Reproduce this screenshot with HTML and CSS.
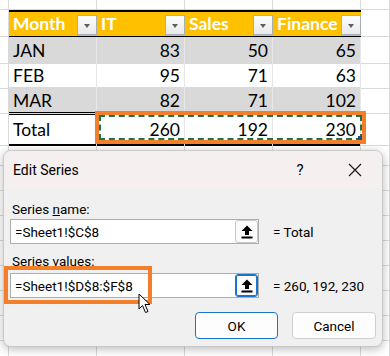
FILE: index.html
```html
<!DOCTYPE html>
<html lang="en">
<head>
  <meta charset="UTF-8">
  <meta name="viewport" content="width=device-width, initial-scale=1.0">
  <title>Edit Series</title>
  <link rel="stylesheet" href="styles.css">
</head>
<body>
  <div class="sheet">
    <div class="row row-top">
      <div class="cell"></div><div class="cell"></div><div class="cell"></div>
      <div class="cell"></div><div class="cell"></div><div class="cell"></div>
    </div>
    <div class="row row-head">
      <div class="cell"></div>
      <div class="cell th">Month<span class="filter"></span></div>
      <div class="cell th">IT<span class="filter"></span></div>
      <div class="cell th">Sales<span class="filter"></span></div>
      <div class="cell th">Finance<span class="filter"></span></div>
      <div class="cell"></div>
    </div>
    <div class="row band">
      <div class="cell"></div>
      <div class="cell td">JAN</div>
      <div class="cell td num">83</div>
      <div class="cell td num">50</div>
      <div class="cell td num">65</div>
      <div class="cell"></div>
    </div>
    <div class="row">
      <div class="cell"></div>
      <div class="cell td">FEB</div>
      <div class="cell td num">95</div>
      <div class="cell td num">71</div>
      <div class="cell td num">63</div>
      <div class="cell"></div>
    </div>
    <div class="row band">
      <div class="cell"></div>
      <div class="cell td">MAR</div>
      <div class="cell td num">82</div>
      <div class="cell td num">71</div>
      <div class="cell td num">102</div>
      <div class="cell"></div>
    </div>
    <div class="row row-total">
      <div class="cell"></div>
      <div class="cell td">Total</div>
      <div class="cell td num">260</div>
      <div class="cell td num">192</div>
      <div class="cell td num">230</div>
      <div class="cell"></div>
    </div>
    <div class="row"><div class="cell"></div><div class="cell"></div><div class="cell"></div><div class="cell"></div><div class="cell"></div><div class="cell"></div></div>
    <div class="row"><div class="cell"></div><div class="cell"></div><div class="cell"></div><div class="cell"></div><div class="cell"></div><div class="cell"></div></div>
    <div class="row"><div class="cell"></div><div class="cell"></div><div class="cell"></div><div class="cell"></div><div class="cell"></div><div class="cell"></div></div>
    <div class="row"><div class="cell"></div><div class="cell"></div><div class="cell"></div><div class="cell"></div><div class="cell"></div><div class="cell"></div></div>
    <div class="row"><div class="cell"></div><div class="cell"></div><div class="cell"></div><div class="cell"></div><div class="cell"></div><div class="cell"></div></div>
    <div class="row"><div class="cell"></div><div class="cell"></div><div class="cell"></div><div class="cell"></div><div class="cell"></div><div class="cell"></div></div>
    <div class="row"><div class="cell"></div><div class="cell"></div><div class="cell"></div><div class="cell"></div><div class="cell"></div><div class="cell"></div></div>
    <div class="row"><div class="cell"></div><div class="cell"></div><div class="cell"></div><div class="cell"></div><div class="cell"></div><div class="cell"></div></div>
    <div class="row"><div class="cell"></div><div class="cell"></div><div class="cell"></div><div class="cell"></div><div class="cell"></div><div class="cell"></div></div>
  </div>

  <!-- copy marquee + highlight on the total cells -->
  <div class="marquee"><span class="handle"></span></div>
  <div class="pick pick-total"></div>

  <div class="dialog">
    <div class="titlebar">
      <span class="title">Edit Series</span>
      <span class="help">?</span>
      <span class="close">
        <svg width="14" height="14" viewBox="0 0 14 14"><path d="M1 1 L13 13 M13 1 L1 13" stroke="#1a1a1a" stroke-width="1.2" fill="none"/></svg>
      </span>
    </div>
    <div class="body">
      <div class="label label-name">Series <u>n</u>ame:</div>
      <div class="field-row">
        <div class="ref-input">
          <span class="ref-text">=Sheet1!$C$8</span>
          <span class="collapse">
            <svg width="12" height="14" viewBox="0 0 12 14"><path d="M6 0.5 L11.5 6 H8 V10 H4 V6 H0.5 Z" fill="#000"/><rect x="0.5" y="11.5" width="11" height="2" fill="#000"/></svg>
          </span>
        </div>
        <span class="result">= Total</span>
      </div>
      <div class="label label-values">Series values:</div>
      <div class="field-row">
        <div class="ref-input">
          <span class="ref-text">=Sheet1!$D$8:$F$8</span>
          <span class="collapse focus">
            <svg width="12" height="14" viewBox="0 0 12 14"><path d="M6 0.5 L11.5 6 H8 V10 H4 V6 H0.5 Z" fill="#000"/><rect x="0.5" y="11.5" width="11" height="2" fill="#000"/></svg>
          </span>
        </div>
        <span class="result">= 260, 192, 230</span>
      </div>
      <div class="buttons">
        <button class="btn btn-default">OK</button>
        <button class="btn">Cancel</button>
      </div>
    </div>
  </div>

  <div class="pick pick-values"></div>

  <svg class="cursor" width="14" height="21" viewBox="0 0 14 21">
    <path d="M1 1 L1 16 L4.5 12.5 L7.5 19.5 L10 18.5 L7 11.5 L12 11.5 Z" fill="#fff" stroke="#000" stroke-width="1" stroke-linejoin="round"/>
  </svg>
</body>
</html>
```

FILE: styles.css
```css
body {
  margin: 0;
  background: #fff;
  overflow: hidden;
}

.sheet {
  font-family: Lato, "Liberation Sans", sans-serif;
  font-size: 17.5px;
  color: #000;
}

.row {
  display: grid;
  grid-template-columns: 9px 88px 88px 88px 88px 1fr;
  height: 25px;
}

.row-top {
  height: 10px;
}

.cell {
  position: relative;
  box-sizing: border-box;
  border-right: 1px solid #d9d9d9;
  border-bottom: 1px solid #d9d9d9;
}

.row-head {
  height: 27px;
}

.th {
  background: #ffc000;
  color: #fff;
  font-weight: 700;
  border-top: 2px solid #000;
  border-bottom: 1px solid #000;
  border-right: none;
  padding: 0 0 0 4px;
  line-height: 24px;
  white-space: nowrap;
}

.filter {
  position: absolute;
  right: 0;
  top: 3px;
  width: 20px;
  height: 20px;
  box-sizing: border-box;
  border: 1px solid #a9aeb5;
  background: linear-gradient(#fdfdfd, #e8e9eb);
}

.filter::after {
  content: '';
  position: absolute;
  left: 6px;
  top: 8px;
  border-left: 3.5px solid transparent;
  border-right: 3.5px solid transparent;
  border-top: 4px solid #5f5f5f;
}

.td {
  padding: 0 4px;
  line-height: 27px;
  white-space: nowrap;
  border-right-color: #e6e6e6;
  border-bottom: none;
}

.band .td {
  background: #d9d9d9;
  border-right-color: #e9e9e9;
}

.num {
  text-align: right;
}

.row-total {
  height: 29px;
}

.row-total .td {
  border-top: 3px double #000;
  border-bottom: 2px solid #000;
  line-height: 29px;
}

.marquee {
  position: absolute;
  left: 99px;
  top: 115px;
  width: 263px;
  height: 25px;
  box-sizing: border-box;
  border: 2px dashed #217346;
}

.handle {
  position: absolute;
  right: -3px;
  bottom: -3px;
  width: 5px;
  height: 5px;
  background: #1f4e79;
}

.pick {
  position: absolute;
  box-sizing: border-box;
  border: 4px solid #f47f2a;
  z-index: 5;
}

.pick-total {
  left: 95px;
  top: 111px;
  width: 271px;
  height: 33px;
}

.pick-values {
  left: 4px;
  top: 266px;
  width: 148px;
  height: 38px;
}

.dialog {
  position: absolute;
  left: 3px;
  top: 150px;
  width: 380px;
  height: 197px;
  box-sizing: border-box;
  border: 1px solid #c9c9c9;
  border-radius: 8px;
  background: #f0f0f0;
  box-shadow: 0 2px 10px rgba(0, 0, 0, .28);
  overflow: hidden;
  font-family: Roboto, "Noto Sans", sans-serif;
  font-size: 13.5px;
  color: #000;
}

.titlebar {
  display: flex;
  align-items: center;
  height: 37px;
  background: #f6efef;
  padding-left: 9px;
}

.title {
  flex: 1;
  font-size: 14px;
}

.help {
  width: 20px;
  text-align: center;
  font-size: 15px;
  margin-right: 38px;
}

.close {
  display: flex;
  margin-right: 20px;
}

.body {
  padding: 0 6px 0 6px;
}

.label {
  padding-left: 2px;
  line-height: 20px;
}

.label-name {
  margin-top: 11px;
}

.label-values {
  margin-top: 7px;
  margin-bottom: 2px;
}

.field-row {
  display: flex;
  align-items: center;
}

.ref-input {
  display: flex;
  align-items: center;
  width: 249px;
  height: 25px;
  box-sizing: border-box;
  border: 1px solid #adadad;
  background: #fff;
}

.ref-text {
  flex: 1;
  padding-left: 4px;
  white-space: nowrap;
}

.collapse {
  display: flex;
  align-items: center;
  justify-content: center;
  width: 23px;
  height: 23px;
  box-sizing: border-box;
  border: 1px solid #c8c8c8;
  border-radius: 3px;
  background: #fbfbfb;
}

.collapse.focus {
  border: 1px solid #1a73c9;
  box-shadow: inset 0 0 0 1px #1a73c9;
}

.result {
  margin-left: 14px;
  white-space: nowrap;
}

.buttons {
  display: flex;
  justify-content: flex-end;
  gap: 14px;
  margin-top: 14px;
}

.btn {
  width: 84px;
  height: 27px;
  border: 1px solid #d0d0d0;
  border-radius: 4px;
  background: #fdfdfd;
  font-family: Roboto, "Noto Sans", sans-serif;
  font-size: 13.5px;
  color: #000;
  padding: 0;
}

.btn-default {
  width: 83px;
  border-color: #1a73c9;
}

.cursor {
  position: absolute;
  left: 138px;
  top: 293px;
  z-index: 10;
}
```
